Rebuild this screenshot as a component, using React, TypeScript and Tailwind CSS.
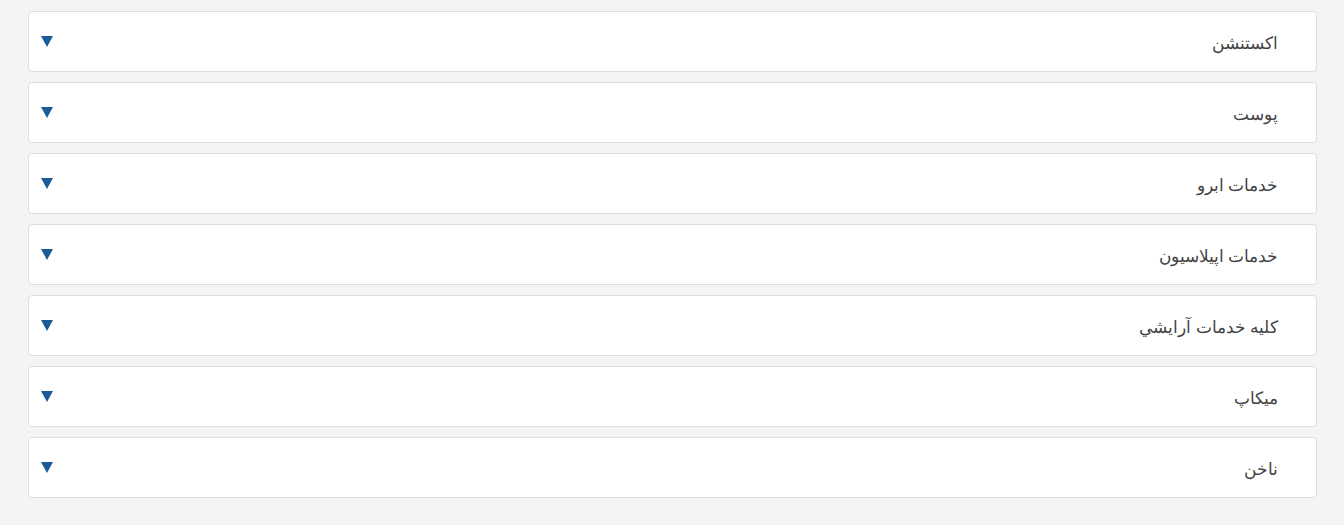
import React, { useState } from 'react';

const items = [
  'اکستنشن',
  'پوست',
  'خدمات ابرو',
  'خدمات اپیلاسیون',
  'کلیه خدمات آرایشي',
  'میکاپ',
  'ناخن',
];

export default function App() {
  const [open, setOpen] = useState<number | null>(null);

  return (
    <div
      className="min-h-screen bg-[#f4f4f4] pt-[11px] pl-[28px] pr-[27px] pb-4"
      style={{ fontFamily: '"Noto Sans", "DejaVu Sans", sans-serif' }}
    >
      <div className="flex flex-col gap-[10px]" dir="rtl">
        {items.map((title, i) => (
          <div key={title} className="bg-white border border-[#dedede] rounded-[4px]">
            <button
              onClick={() => setOpen(open === i ? null : i)}
              className="w-full h-[59px] flex items-center justify-between pr-[38px] pl-[12px] text-right"
            >
              <span className="text-[17px] font-light text-[#444] leading-none pt-[1px]">{title}</span>
              <svg width="12" height="11" viewBox="0 0 12 11">
                <path d="M0 0 H12 L6 11 Z" fill="#1b5b97" />
              </svg>
            </button>
            {open === i && (
              <div className="px-[38px] pb-4 text-sm text-gray-500">—</div>
            )}
          </div>
        ))}
      </div>
    </div>
  );
}
